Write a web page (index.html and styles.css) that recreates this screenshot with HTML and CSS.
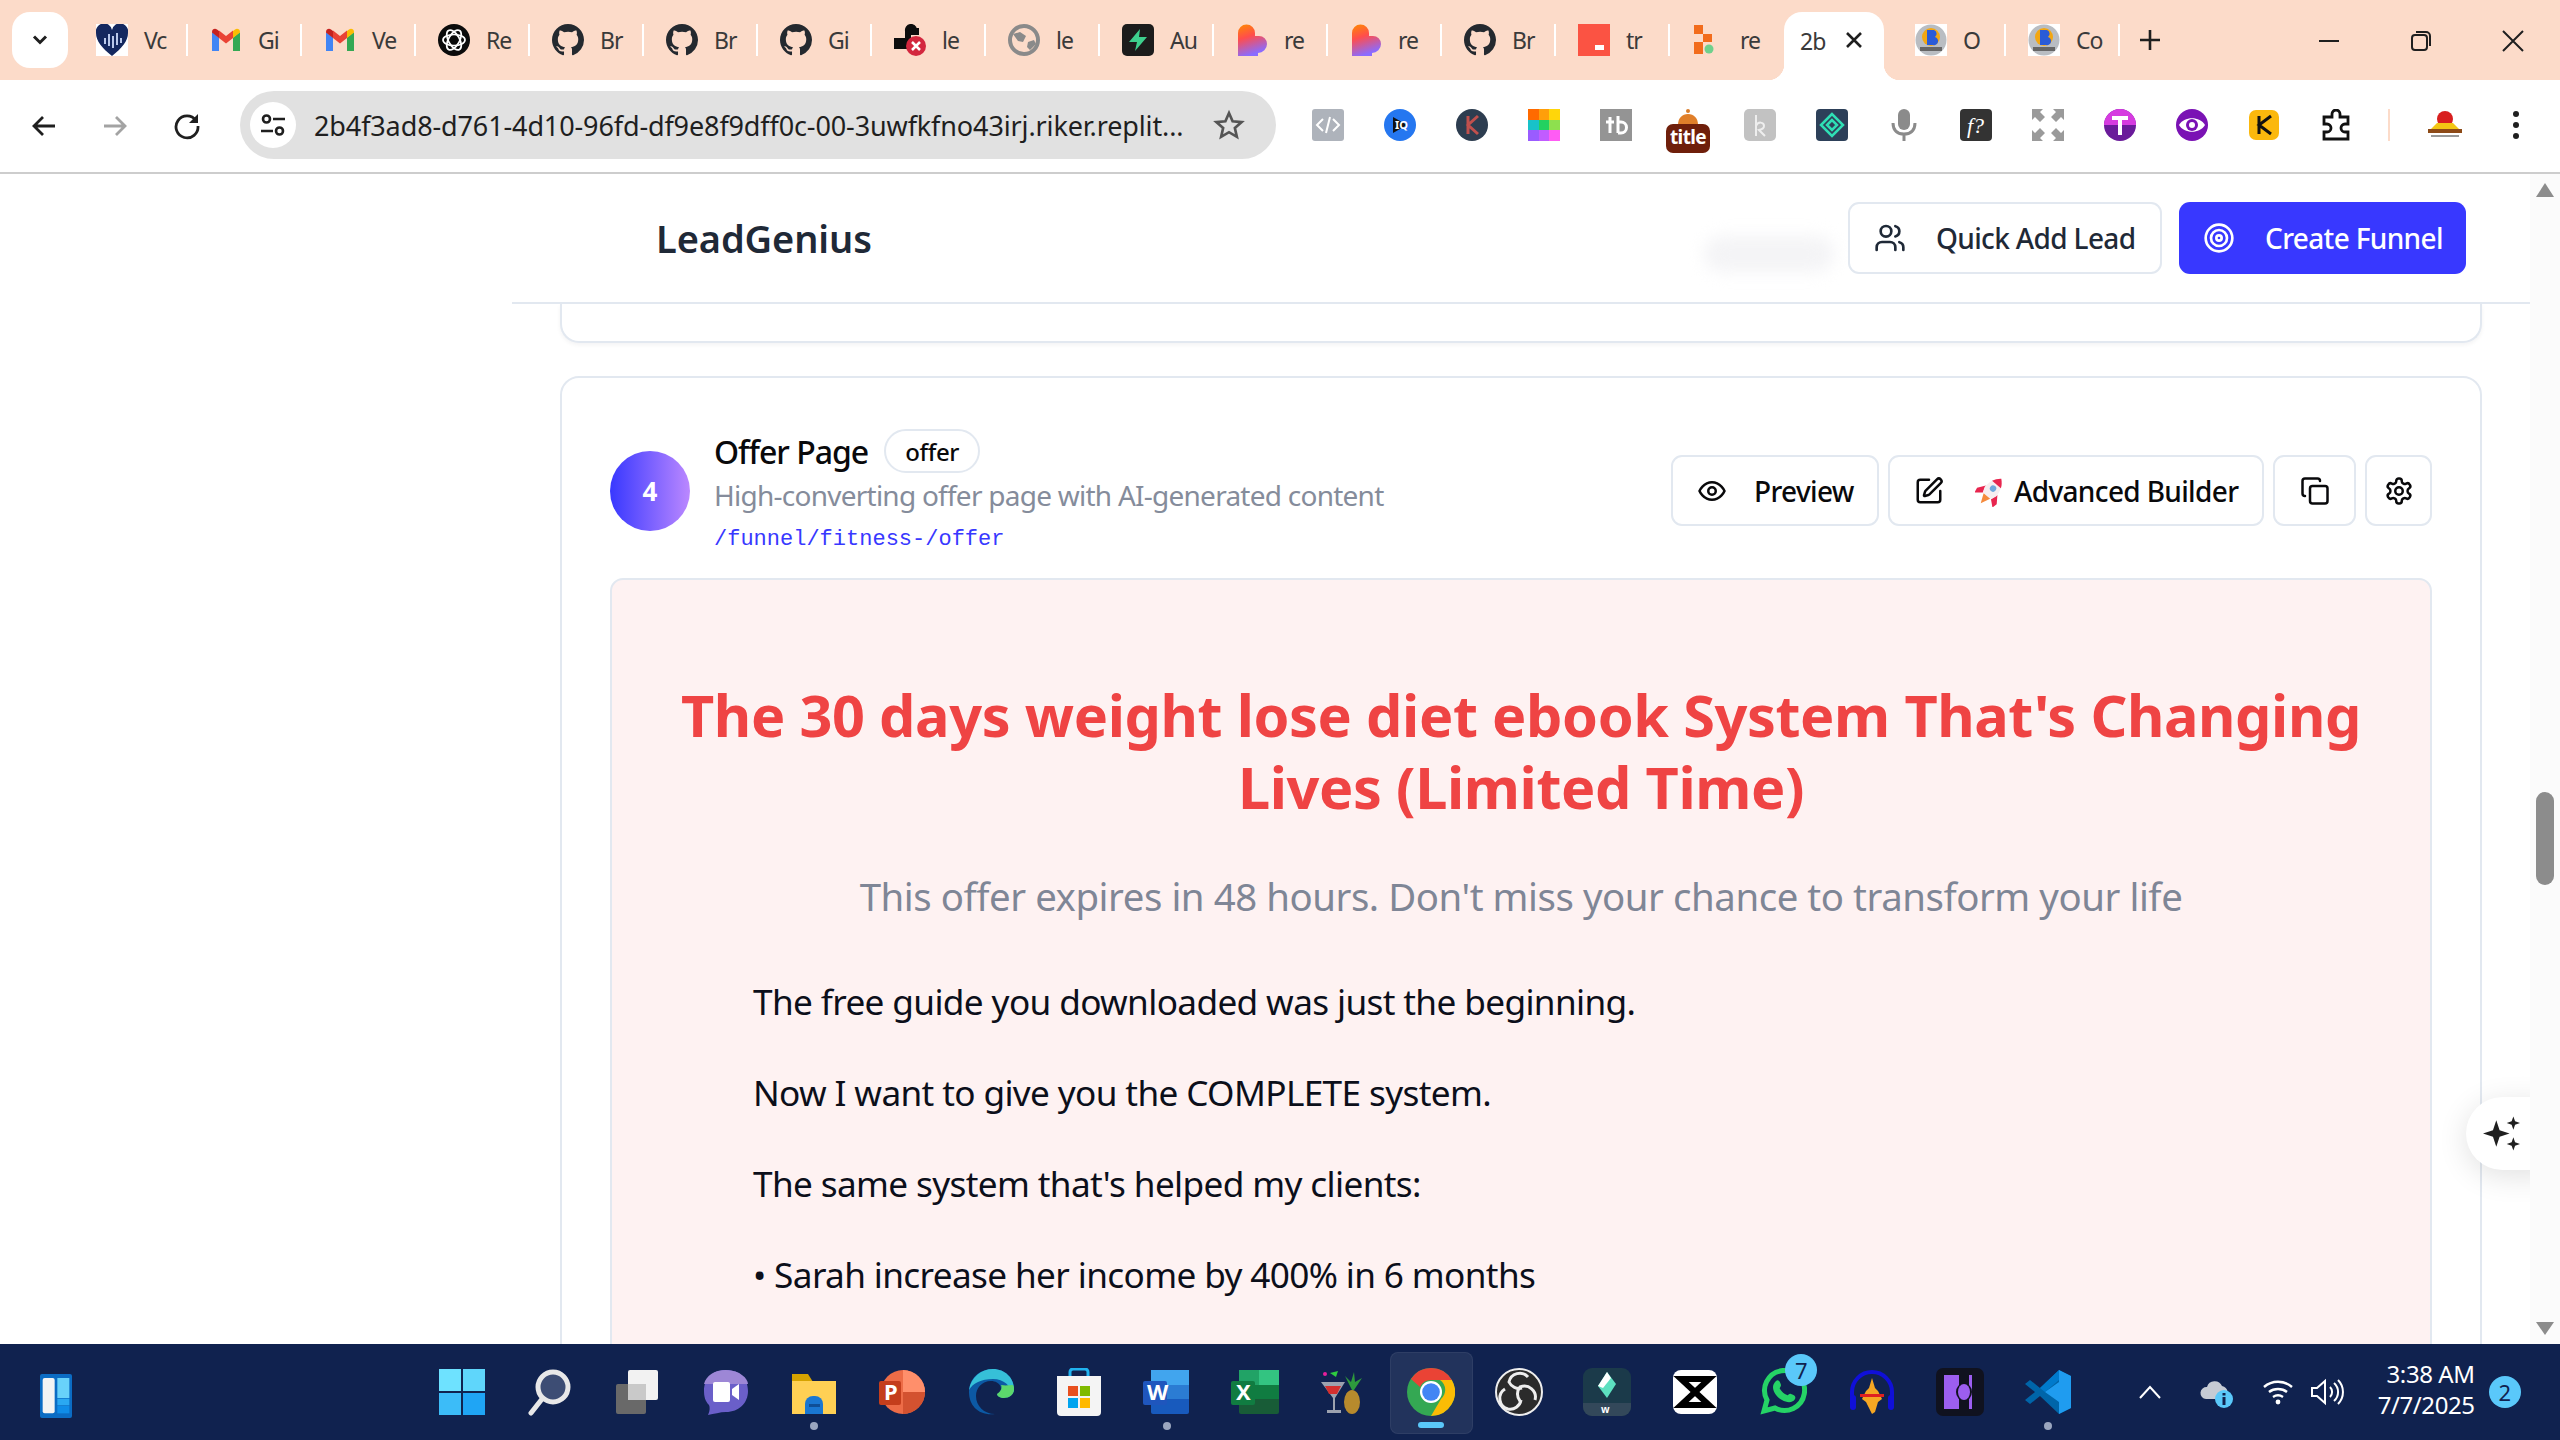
FILE: index.html
```html
<!DOCTYPE html>
<html lang="en">
<head>
<meta charset="utf-8">
<title>LeadGenius</title>
<link rel="stylesheet" href="styles.css">
</head>
<body>
<svg class="defs" width="0" height="0">
  <defs>
    <symbol id="gh" viewBox="0 0 16 16"><path fill="#24292f" d="M8 0C3.58 0 0 3.58 0 8c0 3.54 2.29 6.53 5.47 7.59.4.07.55-.17.55-.38 0-.19-.01-.82-.01-1.49-2.01.37-2.53-.49-2.69-.94-.09-.23-.48-.94-.82-1.13-.28-.15-.68-.52-.01-.53.63-.01 1.08.58 1.23.82.72 1.21 1.87.87 2.33.66.07-.52.28-.87.51-1.07-1.78-.2-3.64-.89-3.64-3.95 0-.87.31-1.59.82-2.15-.08-.2-.36-1.02.08-2.12 0 0 .67-.21 2.2.82.64-.18 1.32-.27 2-.27.68 0 1.36.09 2 .27 1.53-1.04 2.2-.82 2.2-.82.44 1.1.16 1.92.08 2.12.51.56.82 1.27.82 2.15 0 3.07-1.87 3.75-3.65 3.95.29.25.54.73.54 1.48 0 1.07-.01 1.93-.01 2.2 0 .21.15.46.55.38A8.013 8.013 0 0016 8c0-4.42-3.58-8-8-8z"/></symbol>
    <symbol id="gmail" viewBox="0 0 32 32"><path fill="#4285f4" d="M2 27V8l7 5.5V27z"/><path fill="#34a853" d="M23 27V13.500L30 8v19z"/><path fill="#ea4335" d="M9 14V6.500l7 5.500 7-5.500V14l-7 5.500z"/><path fill="#c5221f" d="M2 8c0-3 3-4 5-2.500l2 1.500V14L2 8.500z"/><path fill="#fbbc04" d="M30 8c0-3-3-4-5-2.500L23 7v7l7-5.500z"/></symbol>
    <linearGradient id="lov" x1="0" y1="0" x2="0.300" y2="1"><stop offset="0" stop-color="#ff8a00"/><stop offset=".45" stop-color="#ff4d4d"/><stop offset="1" stop-color="#8a6bff"/></linearGradient>
    <symbol id="lovable" viewBox="0 0 32 32"><path fill="url(#lov)" d="M2 9a8.500 8.500 0 0 1 17 0v3h4a8 8 0 0 1 8 8 9 9 0 0 1-9 9v3H2z"/></symbol>
    <symbol id="bdg" viewBox="0 0 32 32"><rect width="32" height="32" fill="#fff"/><circle cx="16" cy="16" r="15.500" fill="#b9bdc2"/><circle cx="16" cy="13" r="9" fill="#f3a712"/><path fill="#2a5bd7" d="M12 6h7a4 4 0 0 1 1 7 4 4 0 0 1-2 8h-6z"/><rect x="5" y="23" width="22" height="4" fill="#666"/></symbol>
  </defs>
</svg>

<div class="window">
  <header class="tabstrip">
    <button class="tabsearch"><svg width="18" height="12" viewBox="0 0 18 12"><path d="M3 2.500l6 6 6-6" fill="none" stroke="#1f1f1f" stroke-width="3"/></svg></button>
    <div class="tabs">
      <div class="tab"><svg class="fav" viewBox="0 0 32 32"><rect width="32" height="32" fill="#fff"/><path fill="#14285f" d="M16 32C6 24 0 17 0 9a8 8 0 0 1 16-3 8 8 0 0 1 16 3c0 8-6 15-16 23z"/><path fill="#b9c8ea" d="M8 20v-6h2v6zm4 2V10h2v12zm4 2V12h2v12zm4-3V9h2v12zm4-2v-5h2v5z"/></svg><span class="tabtext">Vc</span></div>
      <div class="tab"><svg class="fav"><use href="#gmail"/></svg><span class="tabtext">Gi</span></div>
      <div class="tab"><svg class="fav"><use href="#gmail"/></svg><span class="tabtext">Ve</span></div>
      <div class="tab"><svg class="fav" viewBox="0 0 32 32"><circle cx="16" cy="16" r="16" fill="#0b0b0b"/><g fill="none" stroke="#fff" stroke-width="1.700"><ellipse cx="16" cy="16" rx="11" ry="5.500"/><ellipse cx="16" cy="16" rx="11" ry="5.500" transform="rotate(60 16 16)"/><ellipse cx="16" cy="16" rx="11" ry="5.500" transform="rotate(120 16 16)"/></g></svg><span class="tabtext">Re</span></div>
      <div class="tab"><svg class="fav"><use href="#gh"/></svg><span class="tabtext">Br</span></div>
      <div class="tab"><svg class="fav"><use href="#gh"/></svg><span class="tabtext">Br</span></div>
      <div class="tab"><svg class="fav"><use href="#gh"/></svg><span class="tabtext">Gi</span></div>
      <div class="tab"><svg class="fav" viewBox="0 0 32 32"><path fill="#0d0d0d" d="M0 14h11V7a6 6 0 0 1 12-2l-6 5v15H0z"/><path fill="#0d0d0d" d="M17 4h8v7h-8z"/><circle cx="22" cy="22" r="10" fill="#d3273e"/><path d="M18 18l8 8M26 18l-8 8" stroke="#fff" stroke-width="2.500"/></svg><span class="tabtext">le</span></div>
      <div class="tab"><svg class="fav" viewBox="0 0 32 32"><circle cx="16" cy="16" r="14" fill="none" stroke="#8a8a8a" stroke-width="4"/><path fill="#8a8a8a" d="M5 10l7-2 6 4-3 6-5-1zM20 18l6-2 2 4-6 6-3-3z"/></svg><span class="tabtext">le</span></div>
      <div class="tab"><svg class="fav" viewBox="0 0 32 32"><rect width="32" height="32" rx="5" fill="#1c1c1c"/><path fill="#3ecf8e" d="M18 5L7 18h8l-2 9 12-14h-8z"/></svg><span class="tabtext">Au</span></div>
      <div class="tab"><svg class="fav"><use href="#lovable"/></svg><span class="tabtext">re</span></div>
      <div class="tab"><svg class="fav"><use href="#lovable"/></svg><span class="tabtext">re</span></div>
      <div class="tab"><svg class="fav"><use href="#gh"/></svg><span class="tabtext">Br</span></div>
      <div class="tab"><svg class="fav" viewBox="0 0 32 32"><rect width="32" height="32" fill="#fb5343"/><rect x="17" y="21" width="9" height="5" fill="#fff"/></svg><span class="tabtext">tr</span></div>
      <div class="tab tab-last"><svg class="fav" viewBox="0 0 32 32"><path fill="#f26c1c" d="M2 1h9v9H2zM11 10h9v8h-9zM2 18h9v12H2z"/><circle cx="17" cy="25" r="4.500" fill="#6fd08c"/></svg><span class="tabtext">re</span></div>
      <div class="tab tab-active"><span class="tabtext">2b</span><svg class="tabclose" width="18" height="18" viewBox="0 0 18 18"><path d="M2 2l14 14M16 2L2 16" stroke="#1f1f1f" stroke-width="2.600"/></svg></div>
      <div class="tab tab-after"><svg class="fav"><use href="#bdg"/></svg><span class="tabtext">O</span></div>
      <div class="tab"><svg class="fav"><use href="#bdg"/></svg><span class="tabtext">Co</span></div>
      <button class="newtab"><svg width="22" height="22" viewBox="0 0 22 22"><path d="M11 1v20M1 11h20" stroke="#1f1f1f" stroke-width="2.600"/></svg></button>
    </div>
    <div class="winctrls">
      <svg width="22" height="22" viewBox="0 0 22 22"><path d="M1 11h20" stroke="#1f1f1f" stroke-width="2"/></svg>
      <svg width="22" height="22" viewBox="0 0 22 22"><rect x="2" y="5" width="15" height="15" rx="3" fill="none" stroke="#1f1f1f" stroke-width="2"/><path d="M6 2h10a4 4 0 0 1 4 4v10" fill="none" stroke="#1f1f1f" stroke-width="2"/></svg>
      <svg width="22" height="22" viewBox="0 0 22 22"><path d="M1 1l20 20M21 1L1 21" stroke="#1f1f1f" stroke-width="2"/></svg>
    </div>
  </header>

  <nav class="toolbar">
    <div class="navbtns">
      <svg width="26" height="26" viewBox="0 0 26 26"><path d="M24 13H3M12 4l-9 9 9 9" fill="none" stroke="#1f1f1f" stroke-width="2.800"/></svg>
      <svg width="26" height="26" viewBox="0 0 26 26"><path d="M2 13h21M14 4l9 9-9 9" fill="none" stroke="#a3a3a3" stroke-width="2.800"/></svg>
      <svg width="28" height="28" viewBox="0 0 28 28"><path d="M23 8.500A11 11 0 1 0 25 14" fill="none" stroke="#1f1f1f" stroke-width="2.800"/><path d="M25 2v9h-9z" fill="#1f1f1f"/></svg>
    </div>
    <div class="omnibox">
      <span class="tune"><svg width="28" height="28" viewBox="0 0 28 28"><g fill="none" stroke="#1f1f1f" stroke-width="2.600"><circle cx="7.500" cy="8" r="3.500"/><circle cx="20.500" cy="20" r="3.500"/><path d="M14 8h12M2 20h12"/></g></svg></span>
      <span class="url">2b4f3ad8-d761-4d10-96fd-df9e8f9dff0c-00-3uwfkfno43irj.riker.replit...</span>
      <svg class="star" width="32" height="32" viewBox="0 0 24 24"><path d="M12 3l2.700 6.200 6.800.6-5.100 4.500 1.500 6.600-5.900-3.500-5.900 3.500 1.500-6.600-5.100-4.500 6.800-.6z" fill="none" stroke="#555" stroke-width="2"/></svg>
    </div>
    <div class="exts">
      <svg class="ext" viewBox="0 0 32 32"><rect width="32" height="32" rx="3" fill="#aeb3bb"/><path d="M11 10l-6 6 6 6M21 10l6 6-6 6M18 8l-4 16" fill="none" stroke="#fff" stroke-width="2"/></svg>
      <svg class="ext" viewBox="0 0 32 32"><circle cx="16" cy="16" r="16" fill="#2577f0"/><path fill="#111" d="M9 8l14 8-14 8z"/><text x="11" y="20" class="exttext">IQ</text></svg>
      <svg class="ext" viewBox="0 0 32 32"><circle cx="16" cy="16" r="16" fill="#2d3d50"/><path d="M12 7v18M22 7l-10 9 10 9" fill="none" stroke="#c0504d" stroke-width="3"/></svg>
      <svg class="ext" viewBox="0 0 32 32"><path fill="#ff6a00" d="M0 0h11v11H0z"/><path fill="#ff9f0a" d="M11 0h10v11H11z"/><path fill="#ffd60a" d="M21 0h11v11H21z"/><path fill="#18c2c9" d="M0 11h11v10H0z"/><path fill="#23d160" d="M11 11h10v10H11z"/><path fill="#8ee04e" d="M21 11h11v10H21z"/><path fill="#9a5cff" d="M0 21h11v11H0z"/><path fill="#c15cff" d="M11 21h10v11H11z"/><path fill="#ff5cf4" d="M21 21h11v11H21z"/></svg>
      <svg class="ext" viewBox="0 0 32 32"><rect width="32" height="32" fill="#949494"/><path d="M10 8v16M6 13h8M18 7v17M18 13h3a5 5 0 0 1 0 11h-3" fill="none" stroke="#fff" stroke-width="3"/></svg>
      <div class="ext-title"><svg width="32" height="16" viewBox="0 0 32 16"><circle cx="16" cy="2" r="2" fill="#d97c2b"/><path fill="#e07f2a" d="M6 16c0-7 4-11 10-11s10 4 10 11z"/></svg><span class="title-chip">title</span></div>
      <svg class="ext" viewBox="0 0 32 32"><rect width="32" height="32" rx="5" fill="#c2c2c2"/><path d="M12 6v21M12 17c2-5 8-4 8 0 0 3-5 4-5 4l6 6" fill="none" stroke="#eee" stroke-width="2"/></svg>
      <svg class="ext" viewBox="0 0 32 32"><rect width="32" height="32" rx="4" fill="#2d4059"/><path d="M16 5L5 16l11 11 11-11zM16 11l-5 5 5 5 5-5z" fill="none" stroke="#2fe0b5" stroke-width="2.500"/></svg>
      <svg class="ext" viewBox="0 0 32 32"><rect x="10" y="0" width="12" height="21" rx="6" fill="#8b8b8b"/><path d="M5 14c0 8 5 11 11 11s11-3 11-11M16 25v7" fill="none" stroke="#8b8b8b" stroke-width="3"/></svg>
      <svg class="ext" viewBox="0 0 32 32"><rect width="32" height="32" rx="4" fill="#333"/><text x="7" y="24" class="extf">f?</text></svg>
      <svg class="ext" viewBox="0 0 32 32"><path fill="#9a9a9a" d="M0 0h11L8 3l5 5-5 5-5-5-3 3zM32 0H21l3 3-5 5 5 5 5-5 3 3zM0 32h11l-3-3 5-5-5-5-5 5-3-3zM32 32H21l3-3-5-5 5-5 5 5 3-3z"/></svg>
      <svg class="ext" viewBox="0 0 32 32"><circle cx="16" cy="16" r="16" fill="#6a1b9a"/><path fill="#d63be0" d="M0 16a16 16 0 0 1 32 0z"/><path d="M8 9h16M16 9v17" stroke="#fff" stroke-width="4"/></svg>
      <svg class="ext" viewBox="0 0 32 32"><circle cx="16" cy="16" r="16" fill="#7a12b4"/><path d="M3 16c5-9 21-9 26 0-5 9-21 9-26 0z" fill="#fff"/><circle cx="16" cy="16" r="6" fill="#7a12b4"/><circle cx="16" cy="16" r="3" fill="#fff"/></svg>
      <svg class="ext" viewBox="0 0 32 32"><rect x="1" y="1" width="30" height="30" rx="7" fill="#fbb80d"/><path d="M11 7v18M23 7l-12 9 12 9" fill="none" stroke="#111" stroke-width="3"/></svg>
      <svg class="ext" viewBox="0 0 32 32"><path d="M4 8h8V5a4 4 0 0 1 8 0v3h8v7h-3a4 4 0 0 0 0 8h3v7H4v-7h3a4 4 0 0 0 0-8H4z" fill="none" stroke="#111" stroke-width="2.800"/></svg>
      <span class="ext-sep"></span>
      <svg class="ext ext-flag" viewBox="0 0 40 32"><circle cx="20" cy="10" r="8" fill="#d81f1f"/><path fill="#f3c614" d="M6 20h28l-6-6H12z"/><rect x="3" y="20" width="34" height="4" fill="#8d4a17"/><rect x="6" y="26" width="28" height="2" fill="#999"/></svg>
      <svg class="dots" width="10" height="30" viewBox="0 0 10 30"><circle cx="5" cy="4" r="3" fill="#1f1f1f"/><circle cx="5" cy="15" r="3" fill="#1f1f1f"/><circle cx="5" cy="26" r="3" fill="#1f1f1f"/></svg>
    </div>
  </nav>

  <main class="viewport">
    <aside class="sidebar"></aside>
    <section class="content">
      <div class="appbar">
        <h1 class="brand">LeadGenius</h1>
        <div class="blurdot"></div>
        <div class="appbar-actions">
          <button class="btn btn-outline btn-lead">
            <svg class="ic ic-muted" viewBox="0 0 24 24"><path d="M16 21v-2a4 4 0 0 0-4-4H6a4 4 0 0 0-4 4v2"/><circle cx="9" cy="7" r="4"/><path d="M22 21v-2a4 4 0 0 0-3-3.870"/><path d="M16 3.130a4 4 0 0 1 0 7.750"/></svg>
            Quick Add Lead
          </button>
          <button class="btn btn-primary">
            <svg class="ic" viewBox="0 0 24 24"><circle cx="12" cy="12" r="10"/><circle cx="12" cy="12" r="6"/><circle cx="12" cy="12" r="2"/></svg>
            Create Funnel
          </button>
        </div>
      </div>
      <div class="scroller">
        <div class="card card-prev"></div>
        <article class="card card-offer">
          <div class="step-head">
            <div class="step-num">4</div>
            <div class="step-info">
              <div class="step-title-row">
                <h2 class="step-title">Offer Page</h2>
                <span class="pill">offer</span>
              </div>
              <p class="step-desc">High-converting offer page with AI-generated content</p>
              <p class="step-path">/funnel/fitness-/offer</p>
            </div>
            <div class="step-actions">
              <button class="btn btn-outline btn-sm btn-preview">
                <svg class="ic" viewBox="0 0 24 24"><path d="M2 12s3-7 10-7 10 7 10 7-3 7-10 7-10-7-10-7Z"/><circle cx="12" cy="12" r="3"/></svg>
                Preview
              </button>
              <button class="btn btn-outline btn-sm btn-adv">
                <svg class="ic" viewBox="0 0 24 24"><path d="M12 3H5a2 2 0 0 0-2 2v14a2 2 0 0 0 2 2h14a2 2 0 0 0 2-2v-7"/><path d="M18.375 2.625a1 1 0 0 1 3 3l-9.013 9.014a2 2 0 0 1-.853.505l-2.873.84a.5.5 0 0 1-.62-.62l.84-2.873a2 2 0 0 1 .506-.852z"/></svg>
                <span class="adv-label">
                  <svg class="rocket" viewBox="1 1 30 30"><g transform="rotate(40 16 16)"><path fill="#e8264f" d="M9 15l-5 7 1 5 6-5zM23 15l5 7-1 5-6-5z"/><path fill="#f6eef0" d="M16 1c5 4 7 10 7 16l-2 5H11l-2-5c0-6 2-12 7-16z"/><path fill="#e8264f" d="M16 1c2.500 2 4.300 4.400 5.400 7H10.600C11.700 5.400 13.500 3 16 1z"/><circle cx="16" cy="13" r="3" fill="#6fa8dc"/><path fill="#f58a3c" d="M12 22h8l-4 9z"/></g></svg>
                  Advanced Builder
                </span>
              </button>
              <button class="btn btn-outline btn-icon btn-copy">
                <svg class="ic" viewBox="0 0 24 24"><rect x="8" y="8" width="14" height="14" rx="2"/><path d="M4 16c-1.100 0-2-.9-2-2V4c0-1.100.9-2 2-2h10c1.100 0 2 .9 2 2"/></svg>
              </button>
              <button class="btn btn-outline btn-icon btn-gear">
                <svg class="ic" viewBox="0 0 24 24"><path d="M12.220 2h-.44a2 2 0 0 0-2 2v.18a2 2 0 0 1-1 1.730l-.43.25a2 2 0 0 1-2 0l-.15-.08a2 2 0 0 0-2.730.73l-.22.38a2 2 0 0 0 .73 2.730l.15.1a2 2 0 0 1 1 1.720v.51a2 2 0 0 1-1 1.740l-.15.09a2 2 0 0 0-.73 2.730l.22.38a2 2 0 0 0 2.730.73l.15-.08a2 2 0 0 1 2 0l.43.25a2 2 0 0 1 1 1.730V20a2 2 0 0 0 2 2h.44a2 2 0 0 0 2-2v-.18a2 2 0 0 1 1-1.730l.43-.25a2 2 0 0 1 2 0l.15.08a2 2 0 0 0 2.730-.73l.22-.39a2 2 0 0 0-.73-2.730l-.15-.08a2 2 0 0 1-1-1.740v-.5a2 2 0 0 1 1-1.740l.15-.09a2 2 0 0 0 .73-2.730l-.22-.38a2 2 0 0 0-2.730-.73l-.15.08a2 2 0 0 1-2 0l-.43-.25a2 2 0 0 1-1-1.730V4a2 2 0 0 0-2-2z"/><circle cx="12" cy="12" r="3"/></svg>
              </button>
            </div>
          </div>
          <div class="preview-panel">
            <h3 class="offer-head">The 30 days weight lose diet ebook System That's Changing Lives (Limited Time)</h3>
            <p class="offer-sub">This offer expires in 48 hours. Don't miss your chance to transform your life</p>
            <div class="offer-body">
              <p>The free guide you downloaded was just the beginning.</p>
              <p>Now I want to give you the COMPLETE system.</p>
              <p>The same system that's helped my clients:</p>
              <p>• Sarah increase her income by 400% in 6 months</p>
            </div>
          </div>
        </article>
      </div>
      <button class="sparkle"><svg width="37" height="37" viewBox="0 0 39 36"><g fill="#1f1f1f"><path d="M14 4l3.500 10.500L28 18l-10.500 3.500L14 32l-3.500-10.500L0 18l10.500-3.500z"/><path d="M32 0l1.800 5.200L39 7l-5.200 1.800L32 14l-1.800-5.200L25 7l5.200-1.800z"/><path d="M32 22l1.800 5.200L39 29l-5.200 1.800L32 36l-1.800-5.200L25 29l5.200-1.800z"/></g></svg></button>
    </section>
    <div class="scrollbar">
      <span class="sb-up"></span>
      <span class="sb-thumb"></span>
      <span class="sb-down"></span>
    </div>
  </main>

  <footer class="taskbar">
    <svg class="widgets" viewBox="0 0 48 66"><rect width="48" height="66" rx="3" fill="#0b6cc4"/><rect x="4" y="6" width="18" height="53" rx="3" fill="#f4f4f4"/><rect x="26" y="6" width="18" height="30" fill="#69d2fa"/><rect x="26" y="37" width="18" height="10" fill="#2aa8f2"/><rect x="26" y="48" width="18" height="11" fill="#0f8ce8"/></svg>
    <div class="apps">
      <svg class="app" viewBox="0 0 48 48"><path fill="#6ee2ff" d="M1 1h22v22H1z"/><path fill="#5fd6fb" d="M25 1h22v22H25z"/><path fill="#3cbcf8" d="M1 25h22v22H1z"/><path fill="#1fa5f5" d="M25 25h22v22H25z"/></svg>
      <svg class="app" viewBox="0 0 48 48"><circle cx="27" cy="19" r="15" fill="#3d4d74" stroke="#e8e8e8" stroke-width="5"/><path d="M16 31L5 45" stroke="#e8e8e8" stroke-width="5" stroke-linecap="round"/></svg>
      <svg class="app" viewBox="0 0 48 48"><rect x="2" y="16" width="30" height="30" rx="2" fill="#696969"/><rect x="14" y="2" width="30" height="30" rx="2" fill="#f2f2f2"/><rect x="14" y="16" width="18" height="16" fill="#c9c9c9"/></svg>
      <svg class="app" viewBox="0 0 48 48"><path fill="#6a5fc9" d="M24 2c14 0 22 9 22 21s-9 21-22 21c-6 0-12 2-18 3 2-4 2-8 1-10C3 33 2 28 2 23 2 11 10 2 24 2z"/><path fill="#9d87d6" d="M24 2c14 0 22 9 22 14H2C4 8 12 2 24 2z"/><rect x="11" y="14" width="17" height="20" rx="2" fill="#fff"/><path fill="#fff" d="M30 21l7-5v16l-7-5z"/></svg>
      <span class="app-wrap has-dot"><svg class="app" viewBox="0 0 48 48"><path fill="#d6a300" d="M2 6h16l5 8h23v6H2z"/><rect x="2" y="13" width="44" height="33" fill="#ffd054"/><path fill="#1a77d2" d="M15 46V36a8 8 0 0 1 8-8h2a8 8 0 0 1 8 8v10z"/><rect x="19" y="36" width="11" height="3" fill="#0f4f97"/></svg></span>
      <svg class="app" viewBox="0 0 48 48"><circle cx="25" cy="24" r="22" fill="#ed6c47"/><path fill="#ff8f6b" d="M25 2a22 22 0 0 1 22 22H25z"/><path fill="#d35230" d="M25 24h22a22 22 0 0 1-22 22z"/><rect x="1" y="13" width="22" height="24" rx="2" fill="#c43e1c"/><text x="6" y="32" class="appletter">P</text></svg>
      <svg class="app" viewBox="0 0 48 48"><path fill="#0c59a4" d="M2 24C2 10 13 1 26 1c12 0 21 9 21 20 0 6-5 9-10 9-4 0-7-2-7-4 8-4 3-13-6-13-9 0-15 7-15 15 0 10 8 18 19 18C12 48 2 38 2 24z"/><path fill="#36c0d8" d="M2 22C4 9 14 1 26 1c12 0 21 9 21 20 0 2-1 4-2 5-1-8-8-15-19-15C14 11 6 15 2 22z"/><path fill="#5cd86c" d="M46 17c1 2 1 3 1 4 0 6-5 9-10 9-4 0-7-2-7-4 5-3 5-7 4-9 5 1 9 0 12 0z"/></svg>
      <svg class="app" viewBox="0 0 48 48"><path d="M15 11V4a3 3 0 0 1 3-3h12a3 3 0 0 1 3 3v7" fill="none" stroke="#20b3f0" stroke-width="3"/><path fill="#f4f4f4" d="M2 8h44v36a4 4 0 0 1-4 4H6a4 4 0 0 1-4-4z"/><path fill="#e8501f" d="M13 18h10v10H13z"/><path fill="#7fba00" d="M25 18h10v10H25z"/><path fill="#00a4ef" d="M13 30h10v10H13z"/><path fill="#ffb900" d="M25 30h10v10H25z"/></svg>
      <span class="app-wrap has-dot"><svg class="app" viewBox="0 0 48 48"><rect x="8" y="2" width="38" height="44" rx="2" fill="#185abd"/><rect x="8" y="2" width="38" height="15" fill="#41a5ee"/><rect x="8" y="17" width="38" height="14" fill="#2b7cd3"/><rect x="0" y="13" width="24" height="24" rx="2" fill="#1f56bd"/><text x="4" y="32" class="appletter">W</text></svg></span>
      <svg class="app" viewBox="0 0 48 48"><rect x="8" y="2" width="40" height="44" rx="2" fill="#185c37"/><rect x="8" y="2" width="40" height="15" fill="#21a366"/><rect x="28" y="2" width="20" height="15" fill="#33c481"/><rect x="8" y="17" width="40" height="14" fill="#107c41"/><rect x="0" y="13" width="24" height="24" rx="2" fill="#107c41"/><text x="5" y="32" class="appletter">X</text></svg>
      <svg class="app" viewBox="0 0 48 48"><path fill="#d8d8d8" d="M2 14h24L16 30v12h6v3H8v-3h6V30z" opacity=".7"/><path fill="#d32f2f" d="M6 18h16l-4 8H10z"/><ellipse cx="33" cy="34" rx="8" ry="12" fill="#b78a2d"/><path fill="#2e9a3d" d="M33 22L26 8l6 6 3-10 1 10 7-4-8 12z"/><circle cx="6" cy="6" r="2" fill="#e91e9c"/><path fill="#2ecc40" d="M11 5l8-2-2 6z"/></svg>
      <span class="app-wrap is-active"><svg class="app" viewBox="0 0 48 48"><circle cx="24" cy="24" r="24" fill="#34a853"/><path fill="#ea4335" d="M24 0a24 24 0 0 1 20.800 12H24a12 12 0 0 0-11 7L4 11A24 24 0 0 1 24 0z"/><path fill="#fbbc05" d="M44.800 12A24 24 0 0 1 24 48l10-17a12 12 0 0 0-1-19z"/><circle cx="24" cy="24" r="11" fill="#fff"/><circle cx="24" cy="24" r="8.800" fill="#4285f4"/></svg></span>
      <svg class="app" viewBox="0 0 48 48"><circle cx="24" cy="24" r="23" fill="#2b2b2b" stroke="#eee" stroke-width="2"/><g fill="none" stroke="#eee" stroke-width="3"><path d="M33 9a11 11 0 0 0-19 5 11 11 0 0 0 13 6"/><path d="M10 21a11 11 0 0 0 3 20 11 11 0 0 0 13-9"/><path d="M40 32a11 11 0 0 0-15-13 11 11 0 0 0 0 14"/></g></svg>
      <svg class="app" viewBox="0 0 48 48"><rect width="48" height="48" rx="9" fill="#1b3a4a"/><path fill="#33485a" d="M0 35h48v4a9 9 0 0 1-9 9H9a9 9 0 0 1-9-9z"/><path fill="#5de0c0" d="M24 4l9 12-9 14-9-12z"/><path fill="#fff" d="M24 4l4 6-8 10-5-2z"/><text x="18" y="45" class="appw">w</text></svg>
      <svg class="app" viewBox="0 0 48 48"><rect x="2" y="2" width="44" height="44" rx="8" fill="#fff"/><path d="M10 11h28L10 37h28z" fill="none" stroke="#000" stroke-width="6"/></svg>
      <span class="app-wrap"><svg class="app" viewBox="0 0 48 48"><path fill="none" stroke="#25d366" stroke-width="5" d="M5 43l3-11a20 20 0 1 1 8 8z"/><path fill="#25d366" d="M17 13c2-2 4 0 5 4 0 2-2 3-1 4 2 3 4 5 7 6 1 1 2-2 4-1 4 1 5 3 4 5-2 4-8 4-13 1-6-3-9-9-9-13 0-2 1-4 3-6z"/></svg><span class="count">7</span></span>
      <svg class="app" viewBox="0 0 48 48"><path d="M4 30v-6a20 20 0 0 1 40 0v6" fill="none" stroke="#1010d8" stroke-width="4"/><rect x="2" y="27" width="6" height="15" rx="3" fill="#1010d8"/><rect x="40" y="27" width="6" height="15" rx="3" fill="#1010d8"/><path fill="#f5a623" d="M24 10l3 10 3 3 4 8-4 3-3 10-3 2-3-6-3-6-4-3 4-8 3-3z"/><path fill="#e02020" d="M12 26h24v3H12z"/></svg>
      <svg class="app" viewBox="0 0 48 48"><rect width="48" height="48" rx="7" fill="#10121f"/><rect x="8" y="7" width="15" height="34" fill="#9c5ef0"/><rect x="33" y="7" width="3" height="34" fill="#9c5ef0"/><ellipse cx="28" cy="24" rx="8" ry="9" fill="#10121f"/><ellipse cx="28" cy="24" rx="6" ry="8" fill="#9c5ef0"/></svg>
      <span class="app-wrap has-dot"><svg class="app" viewBox="0 0 48 48"><path fill="#0065a9" d="M35 2L16 20 6 12l-5 4 10 8-10 8 5 4 10-8 19 18 12-6V8z"/><path fill="#007acc" d="M35 2L16 20l5 4 14-12z"/><path fill="#1f9cf0" d="M35 2l12 6v32l-12 6V14L21 24l14 10z"/></svg></span>
    </div>
    <div class="tray">
      <svg class="tray-chev" width="24" height="14" viewBox="0 0 24 14"><path d="M2 13L12 2l10 11" fill="none" stroke="#fff" stroke-width="2"/></svg>
      <svg class="tray-cloud" width="34" height="34" viewBox="0 0 34 34"><path fill="#c6cbd4" d="M6 24a6 6 0 0 1 1-12 8 8 0 0 1 15-1 7 7 0 0 1 2 13z"/><circle cx="24" cy="24" r="9" fill="#5ac8fa"/><rect x="22.500" y="22" width="3" height="8" fill="#10224f"/><rect x="22.500" y="18" width="3" height="2.500" fill="#10224f"/></svg>
      <svg class="tray-wifi" width="32" height="26" viewBox="0 0 32 26"><g fill="none" stroke="#fff" stroke-width="2.400"><path d="M2 8c8-7 20-7 28 0"/><path d="M7 13c5-4 13-4 18 0"/><path d="M11 18c3-2 7-2 10 0"/></g><circle cx="16" cy="23" r="2.400" fill="#fff"/></svg>
      <svg class="tray-vol" width="34" height="28" viewBox="0 0 34 28"><g fill="none" stroke="#fff" stroke-width="2"><path d="M2 10h5l8-7v22l-8-7H2z"/><path d="M20 9a7 7 0 0 1 0 10"/><path d="M24 5a12 12 0 0 1 0 18"/><path d="M28 2a17 17 0 0 1 0 24"/></g></svg>
      <div class="clock"><span>3:38 AM</span><span>7/7/2025</span></div>
      <span class="notif">2</span>
    </div>
  </footer>
</div>
</body>
</html>
```

FILE: styles.css
```css
* { box-sizing: border-box; }
html, body { margin: 0; padding: 0; width: 2560px; height: 1440px; overflow: hidden; background: #fff; }
body { font-family: "Noto Sans", "Open Sans", sans-serif; color: #09090b; }
.defs { display: block; height: 0; }
button { font: inherit; border: 0; background: none; padding: 0; color: inherit; }
h1, h2, h3, p { margin: 0; }
svg { display: block; flex: none; }

.window { width: 2560px; height: 1440px; display: flex; flex-direction: column; }

/* tab strip */
.tabstrip { height: 80px; flex: none; background: #fcdbc9; display: flex; align-items: flex-start; padding-top: 12px; padding-left: 12px; }
.tabsearch { width: 56px; height: 56px; background: #fff; border-radius: 18px; display: flex; align-items: center; justify-content: center; flex: none; }
.tabs { display: flex; align-items: center; margin-left: 6px; height: 68px; }
.tab { width: 114px; height: 32px; padding-left: 22px; display: flex; align-items: center; border-right: 2px solid #fff; flex: none; margin-bottom: 12px; }
.fav { width: 32px; height: 32px; }
.tabtext { font-size: 23px; color: #3a3a3a; margin-left: 16px; width: 26px; white-space: nowrap; letter-spacing: -1px; }
.tab-last { border-right: 0; width: 112px; }
.tab-active { width: 100px; margin-left: 2px; margin-right: 9px; height: 68px; background: #fff; border: 0; border-radius: 18px 18px 0 0; padding-left: 16px; margin-bottom: 0; position: relative; align-items: flex-start; padding-top: 13px; }
.tab-active .tabtext { margin-left: 0; width: 20px; }
.tab-active::before, .tab-active::after { content: ""; position: absolute; bottom: 0; width: 16px; height: 16px; }
.tab-active::before { left: -16px; background: radial-gradient(circle at 0 0, transparent 16px, #fff 16.5px); }
.tab-active::after { right: -16px; background: radial-gradient(circle at 100% 0, transparent 16px, #fff 16.5px); }
.tabclose { margin-left: 25px; margin-top: 6px; }
.tab-after { width: 113px; }
.newtab { margin-left: 19px; margin-bottom: 12px; width: 22px; height: 22px; }
.winctrls { margin-left: auto; display: flex; gap: 70px; padding-top: 18px; padding-right: 36px; }

/* toolbar */
.toolbar { height: 94px; flex: none; background: #fff; border-bottom: 2px solid #cdcdcd; border-radius: 16px 16px 0 0; margin-top: 0; display: flex; align-items: center; padding-left: 31px; }
.navbtns { display: flex; align-items: center; gap: 45px; }
.omnibox { width: 1036px; height: 68px; margin-left: 39px; margin-top: -2px; background: #e1e1e1; border-radius: 34px; display: flex; align-items: center; padding-left: 10px; flex: none; }
.tune { width: 46px; height: 46px; border-radius: 50%; background: #fff; display: flex; align-items: center; justify-content: center; flex: none; }
.url { margin-left: 18px; font-size: 27px; width: 883px; white-space: nowrap; color: #1f1f1f; letter-spacing: -.12px; }
.star { margin-left: 16px; }
.exts { display: flex; align-items: flex-start; gap: 40px; margin-left: 36px; height: 44px; margin-top: 10px; }
.ext { width: 32px; height: 32px; }
.ext-title { width: 32px; display: flex; flex-direction: column; align-items: center; }
.title-chip { width: 44px; height: 29px; background: #6f1f0b; color: #fff; font-size: 19px; font-weight: 700; line-height: 27px; text-align: center; border-radius: 7px; letter-spacing: -.6px; margin-top: -1px; flex: none; }
.exttext { font-size: 11px; font-weight: 700; fill: #fff; }
.extf { font-size: 22px; font-style: italic; fill: #fff; font-family: "Liberation Serif", serif; }
.ext-sep { width: 2px; height: 32px; background: #fcdbc9; margin: 0 -5px 0 -4px; flex: none; }
.ext-flag { width: 40px; margin-left: 0; }
.dots { margin-left: 6px; margin-top: 1px; }

/* viewport */
.viewport { flex: 1 1 auto; min-height: 0; display: flex; background: #fff; overflow: hidden; }
.sidebar { width: 512px; flex: none; background: #fff; }
.content { flex: 1 1 auto; min-width: 0; display: flex; flex-direction: column; position: relative; overflow: hidden; }
.appbar { height: 130px; flex: none; background: #fff; border-bottom: 2px solid #e2e8f0; display: flex; align-items: center; padding: 0 64px 0 144px; position: relative; }
.brand { font-size: 38px; font-weight: 600; color: #1f2937; letter-spacing: -.1px; }
.blurdot { position: absolute; left: 1192px; top: 62px; width: 130px; height: 36px; border-radius: 18px; background: #f4f4f6; filter: blur(8px); }
.appbar-actions { margin-left: auto; display: flex; gap: 17px; align-items: center; position: relative; }

.btn { display: flex; align-items: center; border-radius: 11px; font-size: 28px; font-weight: 500; white-space: nowrap; flex: none; letter-spacing: -.65px; }
.btn-outline { background: #fff; border: 2px solid #e2e8f0; }
.btn-primary { background: #3838ff; color: #fff; width: 287px; height: 72px; padding-left: 24px; gap: 30px; }
.btn-lead { width: 314px; height: 72px; padding-left: 24px; gap: 30px; color: #1f2937; }
.ic { width: 32px; height: 32px; fill: none; stroke: currentColor; stroke-width: 2; stroke-linecap: round; stroke-linejoin: round; }
.ic-muted { color: #1f2937; }

.scroller { flex: 1 1 auto; min-height: 0; overflow: hidden; padding: 0 48px; display: flex; flex-direction: column; gap: 33px; }
.card { border: 2px solid #e2e8f0; background: #fff; flex: none; }
.card-prev { height: 39px; border-top: 0; border-radius: 0 0 19px 19px; box-shadow: 0 2px 4px rgba(15,23,42,.05); }
.card-offer { border-radius: 19px; padding: 27px 48px 0 48px; height: 1200px; }

.step-head { display: flex; align-items: center; height: 171px; }
.step-num { width: 80px; height: 80px; border-radius: 50%; background: linear-gradient(90deg, #3838ff, #bb88ff); color: #fff; font-size: 26px; font-weight: 700; display: flex; align-items: center; justify-content: center; flex: none; }
.step-info { margin-left: 24px; margin-top: 2px; display: flex; flex-direction: column; }
.step-title-row { display: flex; align-items: center; gap: 16px; height: 44px; }
.step-title { font-size: 32px; font-weight: 500; letter-spacing: -1px; }
.pill { height: 44px; width: 96px; border: 2px solid #e2e8f0; border-radius: 22px; font-size: 24px; font-weight: 500; display: flex; align-items: center; justify-content: center; letter-spacing: -.4px; }
.step-desc { font-size: 28px; line-height: 42px; color: #858c9b; margin-top: 1px; letter-spacing: -.75px; white-space: nowrap; }
.step-path { font-family: "Liberation Mono", monospace; font-size: 22px; line-height: 28px; color: #3838ff; margin-top: 10px; }
.step-actions { margin-left: auto; display: flex; gap: 9px; align-items: center; }
.btn-sm { height: 71px; padding-left: 24px; gap: 24px; }
.btn-preview { width: 208px; gap: 27px; }
.btn-adv { width: 376px; gap: 31px; }
.adv-label { display: flex; align-items: center; gap: 7px; }
.rocket { width: 32px; height: 32px; }
.btn-icon { height: 71px; justify-content: center; }
.btn-copy { width: 83px; }
.btn-gear { width: 67px; }
.btn-sm .ic, .btn-icon .ic { width: 30px; height: 30px; }
.btn-sm .rocket { width: 32px; height: 32px; }

.preview-panel { margin-top: 2px; height: 1000px; background: #fef2f2; border: 2px solid #e2e8f0; border-radius: 13px; padding: 99px 62px 0 62px; }
.offer-head { font-size: 57.600px; line-height: 72px; font-weight: 700; color: #ef4444; text-align: center; letter-spacing: -.4px; }
.offer-sub { font-size: 38.400px; line-height: 56px; color: #7f8696; text-align: center; margin-top: 45px; letter-spacing: -.45px; }
.offer-body { margin: 50px 0 0 79px; display: flex; flex-direction: column; gap: 36px; }
.offer-body p { font-size: 35.200px; line-height: 55px; color: #0c0f1a; letter-spacing: -.64px; }

.sparkle { position: absolute; left: 1954px; top: 923px; width: 90px; height: 73px; background: #fff; border-radius: 37px 0 0 37px; box-shadow: 0 6px 30px rgba(0,0,0,.12); display: flex; align-items: center; padding-left: 17px; }

.scrollbar { width: 30px; flex: none; background: #fbfbfb; position: relative; }
.sb-up, .sb-down { position: absolute; left: 6px; width: 0; height: 0; border-left: 9px solid transparent; border-right: 9px solid transparent; }
.sb-up { top: 9px; border-bottom: 14px solid #8c8c8c; }
.sb-down { top: 1148px; border-top: 13px solid #8c8c8c; }
.sb-thumb { position: absolute; top: 618px; left: 6px; width: 18px; height: 93px; border-radius: 9px; background: #8c8c8c; }

/* taskbar */
.taskbar { height: 96px; flex: none; background: #10224f; display: flex; align-items: flex-start; padding: 30px 0 0 32px; color: #fff; }
.widgets { width: 48px; height: 44px; }
.apps { display: flex; gap: 40.100px; margin-left: 358px; margin-top: -6px; }
.app { width: 48px; height: 48px; }
.app-wrap { position: relative; display: block; width: 48px; height: 48px; }
.has-dot::after { content: ""; position: absolute; left: 20px; top: 54px; width: 8px; height: 8px; border-radius: 50%; background: #9aa6bf; }
.is-active::before { content: ""; position: absolute; left: -17px; top: -16px; width: 81px; height: 80px; border-radius: 8px; background: rgba(255,255,255,.08); border: 1px solid rgba(255,255,255,.06); }
.is-active .app { position: relative; }
.is-active::after { content: ""; position: absolute; left: 11px; top: 54px; width: 26px; height: 6px; border-radius: 3px; background: #5ac8fa; }
.appletter { font-size: 22px; font-weight: 700; fill: #fff; }
.appw { font-size: 10px; font-weight: 700; fill: #fff; }
.count { position: absolute; left: 26px; top: -14px; width: 32px; height: 32px; border-radius: 50%; background: #5ac8fa; color: #10224f; font-size: 22px; display: flex; align-items: center; justify-content: center; }
.tray { display: flex; align-items: center; margin-left: 66px; margin-top: -12px; height: 60px; }
.tray-cloud { margin-left: 38px; }
.tray-wifi { margin-left: 28px; }
.tray-vol { margin-left: 16px; }
.clock { margin-left: 9px; margin-top: -6px; width: 122px; display: flex; flex-direction: column; align-items: flex-end; font-size: 24px; line-height: 31px; letter-spacing: -.4px; }
.notif { margin-left: 14px; width: 32px; height: 32px; border-radius: 50%; background: #5ac8fa; color: #10224f; font-size: 22px; display: flex; align-items: center; justify-content: center; flex: none; }
```
